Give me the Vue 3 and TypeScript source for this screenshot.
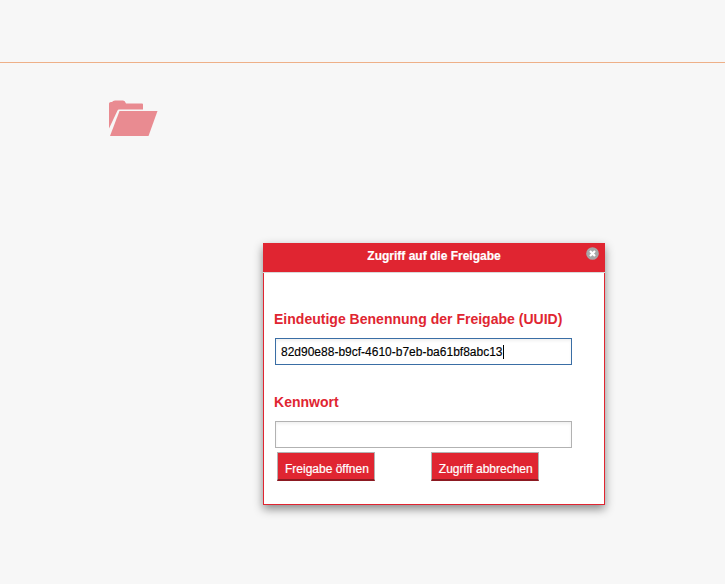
<script setup lang="ts">
const uuid = "82d90e88-b9cf-4610-b7eb-ba61bf8abc13";
</script>

<template>
  <div class="page">
    <header class="topbar"></header>
    <main class="content">
      <svg class="folder" width="49" height="36" viewBox="0 0 49 36" aria-hidden="true">
        <path d="M0 3.5 Q0 2 2 2 L3 2 Q4 0.500 6 0.500 L14 0.500 Q16 0.500 17 3.500 L33 3.500 Q34 3.500 34 4.500 L34 9.500 L9.500 9.500 L8.500 10.500 L0 28.500 Z" fill="#e98b91" />
        <path d="M10.500 11 L48.500 11 L39.500 36 L1 36 Z" fill="#e98b91" />
      </svg>
    </main>
    <section class="dialog">
      <div class="dialog-title">
        <span>Zugriff auf die Freigabe</span>
        <span class="close" aria-label="Schließen">
          <svg width="13" height="13" viewBox="0 0 13 13">
            <circle cx="6.500" cy="6.500" r="6.300" fill="#a6a6a6" />
            <path d="M4 4 L9 9 M9 4 L4 9" stroke="#fff" stroke-width="2.200" />
          </svg>
        </span>
      </div>
      <div class="dialog-body">
        <label class="label first">Eindeutige Benennung der Freigabe (UUID)</label>
        <div class="input focused"><span>{{ uuid }}</span><i class="caret"></i></div>
        <label class="label second">Kennwort</label>
        <div class="input"></div>
        <div class="actions">
          <button class="btn" type="button">Freigabe öffnen</button>
          <button class="btn" type="button">Zugriff abbrechen</button>
        </div>
      </div>
    </section>
  </div>
</template>

<style>
html, body { margin: 0; background: #f7f7f7; }
</style>

<style scoped>
.page {
  position: relative;
  width: 725px;
  height: 584px;
  overflow: hidden;
  background: #f7f7f7;
  font-family: "Liberation Sans", Arial, sans-serif;
}
.topbar {
  height: 62px;
  border-bottom: 1px solid #eeb088;
}
.content {
  padding: 37px 0 0 109px;
}
.folder {
  display: block;
}
.dialog {
  position: absolute;
  left: 263px;
  top: 243px;
  width: 342px;
  height: 262px;
  box-sizing: border-box;
  background: #fff;
  border: 1px solid #e02531;
  box-shadow: 0 4px 9px rgba(0, 0, 0, 0.45);
}
.dialog-title {
  position: relative;
  height: 28px;
  margin: -1px -1px 0;
  padding-top: 1px;
  background: #e02531;
  color: #fff;
  font-size: 12px;
  font-weight: 700;
  line-height: 24px;
  text-align: center;
  border-bottom: 1px solid #d9d9d9;
  -webkit-text-stroke: 0.2px #fff;
}
.close {
  position: absolute;
  right: 6px;
  top: 4px;
  line-height: 0;
}
.dialog-body {
  padding: 0 0 0 10px;
}
.label {
  display: block;
  color: #e02531;
  font-size: 14px;
  font-weight: 700;
  line-height: 16px;
  letter-spacing: 0.015px;
}
.first { margin-top: 38px; }
.second { margin-top: 29px; }
.input {
  box-sizing: border-box;
  display: flex;
  align-items: center;
  width: 297px;
  height: 27px;
  margin: 11px 0 0 1px;
  padding: 0 5px;
  background: #fff;
  border: 1px solid #b2b2b2;
  box-shadow: inset 0 2px 3px rgba(0, 0, 0, 0.06);
  color: #000;
  font-size: 12px;
  -webkit-text-stroke: 0.15px #000;
}
.input.focused {
  border-color: #3a6ea5;
}
.caret {
  width: 1px;
  height: 14px;
  background: #000;
}
.actions {
  display: flex;
  gap: 56px;
  margin: 4px 0 0 3px;
}
.btn {
  height: 29px;
  padding: 5px 5px 0 7px;
  background: #e02531;
  color: #fff;
  border: 1px solid #b3b3b3;
  border-bottom: 2px solid #8c1a22;
  border-radius: 0;
  font-family: inherit;
  font-size: 12px;
  white-space: nowrap;
  -webkit-text-stroke: 0.2px #fff;
}
</style>
